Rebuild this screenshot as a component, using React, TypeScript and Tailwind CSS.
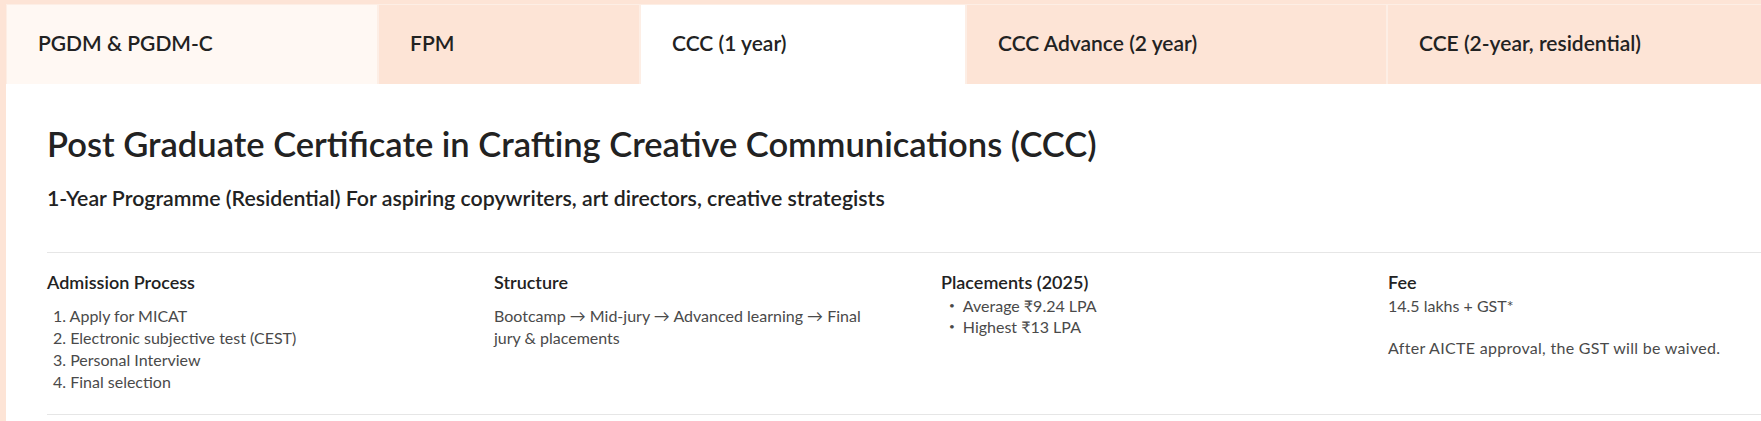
import React from "react";

const tabs = [
  { label: "PGDM & PGDM-C", w: "w-[372px]", cls: "bg-[#fff8f3]" },
  { label: "FPM", w: "w-[262px]", cls: "bg-[#fde4d6]" },
  { label: "CCC (1 year)", w: "w-[326px]", cls: "bg-white" },
  { label: "CCC Advance (2 year)", w: "w-[421px]", cls: "bg-[#fde4d6]" },
  { label: "CCE (2-year, residential)", w: "w-[400px]", cls: "bg-[#fde4d6]" },
];

export default function App() {
  return (
    <div
      className="w-[1761px] h-[421px] overflow-hidden bg-[#fde4d6] pl-[6px] pt-[4px]"
      style={{ fontFamily: "Lato, 'Noto Sans', sans-serif" }}
    >
      <div className="flex h-[80px] shrink-0">
        {tabs.map((t, i) => (
          <div
            key={i}
            className={`${t.w} ${t.cls} shrink-0 flex items-center pl-[31px] border-x border-t border-[#fdeee5] text-[21px] font-semibold text-[#222222] pb-[4px]`}
          >
            {t.label}
          </div>
        ))}
      </div>
      <div className="bg-white h-full pl-[41px] pt-[42px]">
        <h1 className="text-[34.5px] leading-[36px] font-semibold text-[#222222]">
          Post Graduate Certificate in Crafting Creative Communications (CCC)
        </h1>
        <p className="mt-[22px] text-[21.3px] leading-[28px] font-semibold text-[#222222]">
          1-Year Programme (Residential) For aspiring copywriters, art directors, creative strategists
        </p>
        <div className="mt-[40px] border-t border-[#e6e6e6] border-b pb-[21px] pt-[17px] grid grid-cols-[400px_400px_400px_400px] gap-x-[47px] w-[1800px]">
          <div>
            <h3 className="text-[18px] leading-[24px] font-semibold text-[#222222]">Admission Process</h3>
            <ol className="mt-[11px] pl-[6px] text-[16px] leading-[22px] text-[#4a4a4a]">
              <li>1. Apply for MICAT</li>
              <li>2. Electronic subjective test (CEST)</li>
              <li>3. Personal Interview</li>
              <li>4. Final selection</li>
            </ol>
          </div>
          <div>
            <h3 className="text-[18px] leading-[24px] font-semibold text-[#222222]">Structure</h3>
            <p className="mt-[11px] text-[16px] leading-[22px] text-[#4a4a4a] w-[395px]">
              Bootcamp → Mid-jury → Advanced learning → Final jury &amp; placements
            </p>
          </div>
          <div>
            <h3 className="text-[18px] leading-[24px] font-semibold text-[#222222]">Placements (2025)</h3>
            <ul className="mt-[1px] pl-[8px] text-[16px] leading-[21px] text-[#4a4a4a]">
              <li className="flex items-center gap-[8px]"><span className="text-[10px]">•</span>Average ₹9.24 LPA</li>
              <li className="flex items-center gap-[8px]"><span className="text-[10px]">•</span>Highest ₹13 LPA</li>
            </ul>
          </div>
          <div>
            <h3 className="text-[18px] leading-[24px] font-semibold text-[#222222]">Fee</h3>
            <p className="mt-[1px] text-[16px] leading-[21px] text-[#4a4a4a]">14.5 lakhs + GST*</p>
            <p className="mt-[21px] text-[16px] leading-[22px] text-[#4a4a4a] tracking-[0.3px]">After AICTE approval, the GST will be waived.</p>
          </div>
        </div>
      </div>
    </div>
  );
}
